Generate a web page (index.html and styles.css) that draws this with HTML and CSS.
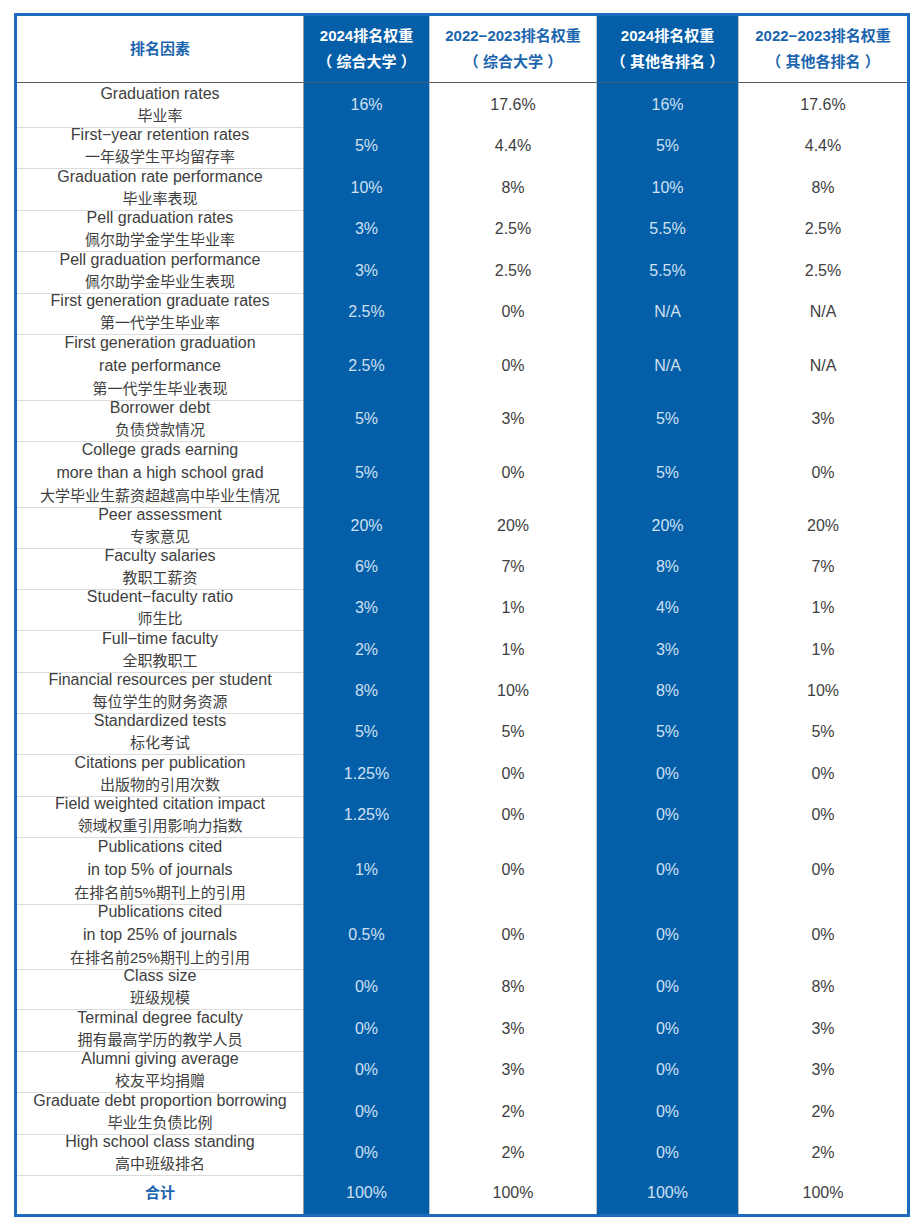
FILE: index.html
```html
<!DOCTYPE html>
<html lang="zh">
<head>
<meta charset="utf-8">
<link rel="stylesheet" href="styles.css">
</head>
<body>
<div class="wrap">
  <div class="row head">
    <div class="c w">排名因素</div>
    <div class="c b"><span>2024排名权重</span><span>（ 综合大学 ）</span></div>
    <div class="c w"><span>2022−2023排名权重</span><span>（ 综合大学 ）</span></div>
    <div class="c b"><span>2024排名权重</span><span>（ 其他各排名 ）</span></div>
    <div class="c w"><span>2022−2023排名权重</span><span>（ 其他各排名 ）</span></div>
  </div>

  <div class="row"><div class="c f"><span>Graduation rates</span><span>毕业率</span></div><div class="c b">16%</div><div class="c w">17.6%</div><div class="c b">16%</div><div class="c w">17.6%</div></div>
  <div class="row"><div class="c f"><span>First−year retention rates</span><span>一年级学生平均留存率</span></div><div class="c b">5%</div><div class="c w">4.4%</div><div class="c b">5%</div><div class="c w">4.4%</div></div>
  <div class="row"><div class="c f"><span>Graduation rate performance</span><span>毕业率表现</span></div><div class="c b">10%</div><div class="c w">8%</div><div class="c b">10%</div><div class="c w">8%</div></div>
  <div class="row"><div class="c f"><span>Pell graduation rates</span><span>佩尔助学金学生毕业率</span></div><div class="c b">3%</div><div class="c w">2.5%</div><div class="c b">5.5%</div><div class="c w">2.5%</div></div>
  <div class="row"><div class="c f"><span>Pell graduation performance</span><span>佩尔助学金毕业生表现</span></div><div class="c b">3%</div><div class="c w">2.5%</div><div class="c b">5.5%</div><div class="c w">2.5%</div></div>
  <div class="row"><div class="c f"><span>First generation graduate rates</span><span>第一代学生毕业率</span></div><div class="c b">2.5%</div><div class="c w">0%</div><div class="c b">N/A</div><div class="c w">N/A</div></div>
  <div class="row tall"><div class="c f"><span>First generation graduation</span><span>rate performance</span><span>第一代学生毕业表现</span></div><div class="c b">2.5%</div><div class="c w">0%</div><div class="c b">N/A</div><div class="c w">N/A</div></div>
  <div class="row"><div class="c f"><span>Borrower debt</span><span>负债贷款情况</span></div><div class="c b">5%</div><div class="c w">3%</div><div class="c b">5%</div><div class="c w">3%</div></div>
  <div class="row tall"><div class="c f"><span>College grads earning</span><span>more than a high school grad</span><span>大学毕业生薪资超越高中毕业生情况</span></div><div class="c b">5%</div><div class="c w">0%</div><div class="c b">5%</div><div class="c w">0%</div></div>
  <div class="row"><div class="c f"><span>Peer assessment</span><span>专家意见</span></div><div class="c b">20%</div><div class="c w">20%</div><div class="c b">20%</div><div class="c w">20%</div></div>
  <div class="row"><div class="c f"><span>Faculty salaries</span><span>教职工薪资</span></div><div class="c b">6%</div><div class="c w">7%</div><div class="c b">8%</div><div class="c w">7%</div></div>
  <div class="row"><div class="c f"><span>Student−faculty ratio</span><span>师生比</span></div><div class="c b">3%</div><div class="c w">1%</div><div class="c b">4%</div><div class="c w">1%</div></div>
  <div class="row"><div class="c f"><span>Full−time faculty</span><span>全职教职工</span></div><div class="c b">2%</div><div class="c w">1%</div><div class="c b">3%</div><div class="c w">1%</div></div>
  <div class="row"><div class="c f"><span>Financial resources per student</span><span>每位学生的财务资源</span></div><div class="c b">8%</div><div class="c w">10%</div><div class="c b">8%</div><div class="c w">10%</div></div>
  <div class="row"><div class="c f"><span>Standardized tests</span><span>标化考试</span></div><div class="c b">5%</div><div class="c w">5%</div><div class="c b">5%</div><div class="c w">5%</div></div>
  <div class="row"><div class="c f"><span>Citations per publication</span><span>出版物的引用次数</span></div><div class="c b">1.25%</div><div class="c w">0%</div><div class="c b">0%</div><div class="c w">0%</div></div>
  <div class="row"><div class="c f"><span>Field weighted citation impact</span><span>领域权重引用影响力指数</span></div><div class="c b">1.25%</div><div class="c w">0%</div><div class="c b">0%</div><div class="c w">0%</div></div>
  <div class="row tall"><div class="c f"><span>Publications cited</span><span>in top 5% of journals</span><span>在排名前5%期刊上的引用</span></div><div class="c b">1%</div><div class="c w">0%</div><div class="c b">0%</div><div class="c w">0%</div></div>
  <div class="row tall"><div class="c f"><span>Publications cited</span><span>in top 25% of journals</span><span>在排名前25%期刊上的引用</span></div><div class="c b">0.5%</div><div class="c w">0%</div><div class="c b">0%</div><div class="c w">0%</div></div>
  <div class="row"><div class="c f"><span>Class size</span><span>班级规模</span></div><div class="c b">0%</div><div class="c w">8%</div><div class="c b">0%</div><div class="c w">8%</div></div>
  <div class="row"><div class="c f"><span>Terminal degree faculty</span><span>拥有最高学历的教学人员</span></div><div class="c b">0%</div><div class="c w">3%</div><div class="c b">0%</div><div class="c w">3%</div></div>
  <div class="row"><div class="c f"><span>Alumni giving average</span><span>校友平均捐赠</span></div><div class="c b">0%</div><div class="c w">3%</div><div class="c b">0%</div><div class="c w">3%</div></div>
  <div class="row"><div class="c f"><span>Graduate debt proportion borrowing</span><span>毕业生负债比例</span></div><div class="c b">0%</div><div class="c w">2%</div><div class="c b">0%</div><div class="c w">2%</div></div>
  <div class="row"><div class="c f"><span>High school class standing</span><span>高中班级排名</span></div><div class="c b">0%</div><div class="c w">2%</div><div class="c b">0%</div><div class="c w">2%</div></div>
  <div class="row total"><div class="c f sum">合计</div><div class="c b">100%</div><div class="c w">100%</div><div class="c b">100%</div><div class="c w">100%</div></div>
</div>
</body>
</html>
```

FILE: styles.css
```css
html, body {
  margin: 0;
  padding: 0;
  background: #ffffff;
}
body {
  font-family: "Liberation Sans", "Noto Sans CJK SC", sans-serif;
  color: #404040;
  font-size: 16px;
}
.wrap {
  margin: 13px 0 0 14px;
  width: 896px;
  box-sizing: border-box;
  border: 3px solid #1b6cbf;
}
.row {
  display: grid;
  grid-template-columns: 287px 126px 167px 142px 168px;
  height: 41.4px;
}
.row.tall { height: 65.4px; }
.row.head { height: 67px; }
.row.total { height: 42px; }

.c {
  box-sizing: border-box;
  display: flex;
  flex-direction: column;
  align-items: center;
  justify-content: center;
  text-align: center;
  white-space: nowrap;
  line-height: 22px;
  border-bottom: 1px solid #dcdcdc;
  border-right: 1px solid #c4c4c4;
  overflow: visible;
}
.row .c:last-child { border-right: none; }
.row.tall .c { line-height: 23px; }
.row.total .c { border-bottom: none; }

.c.f { border-right-color: #9a9a9a; }
.c.f span:last-child { font-size: 15px; }

.c.b {
  background: #045ea8;
  color: #cfe0f1;
  border-bottom-color: #4f84bb;
  border-right-color: #b9c3cd;
}
.c.w { background: #ffffff; }

.head .c {
  font-size: 15px;
  font-weight: bold;
  line-height: 26px;
  border-bottom: 1px solid #5a5a5a;
  color: #1b64ae;
}
.head .c.b { color: #ffffff; border-bottom-color: #3d5f80; }
.head .c:first-child { border-right-color: #9a9a9a; }

.sum {
  font-size: 15px;
  font-weight: bold;
  color: #1b64ae;
}
```
